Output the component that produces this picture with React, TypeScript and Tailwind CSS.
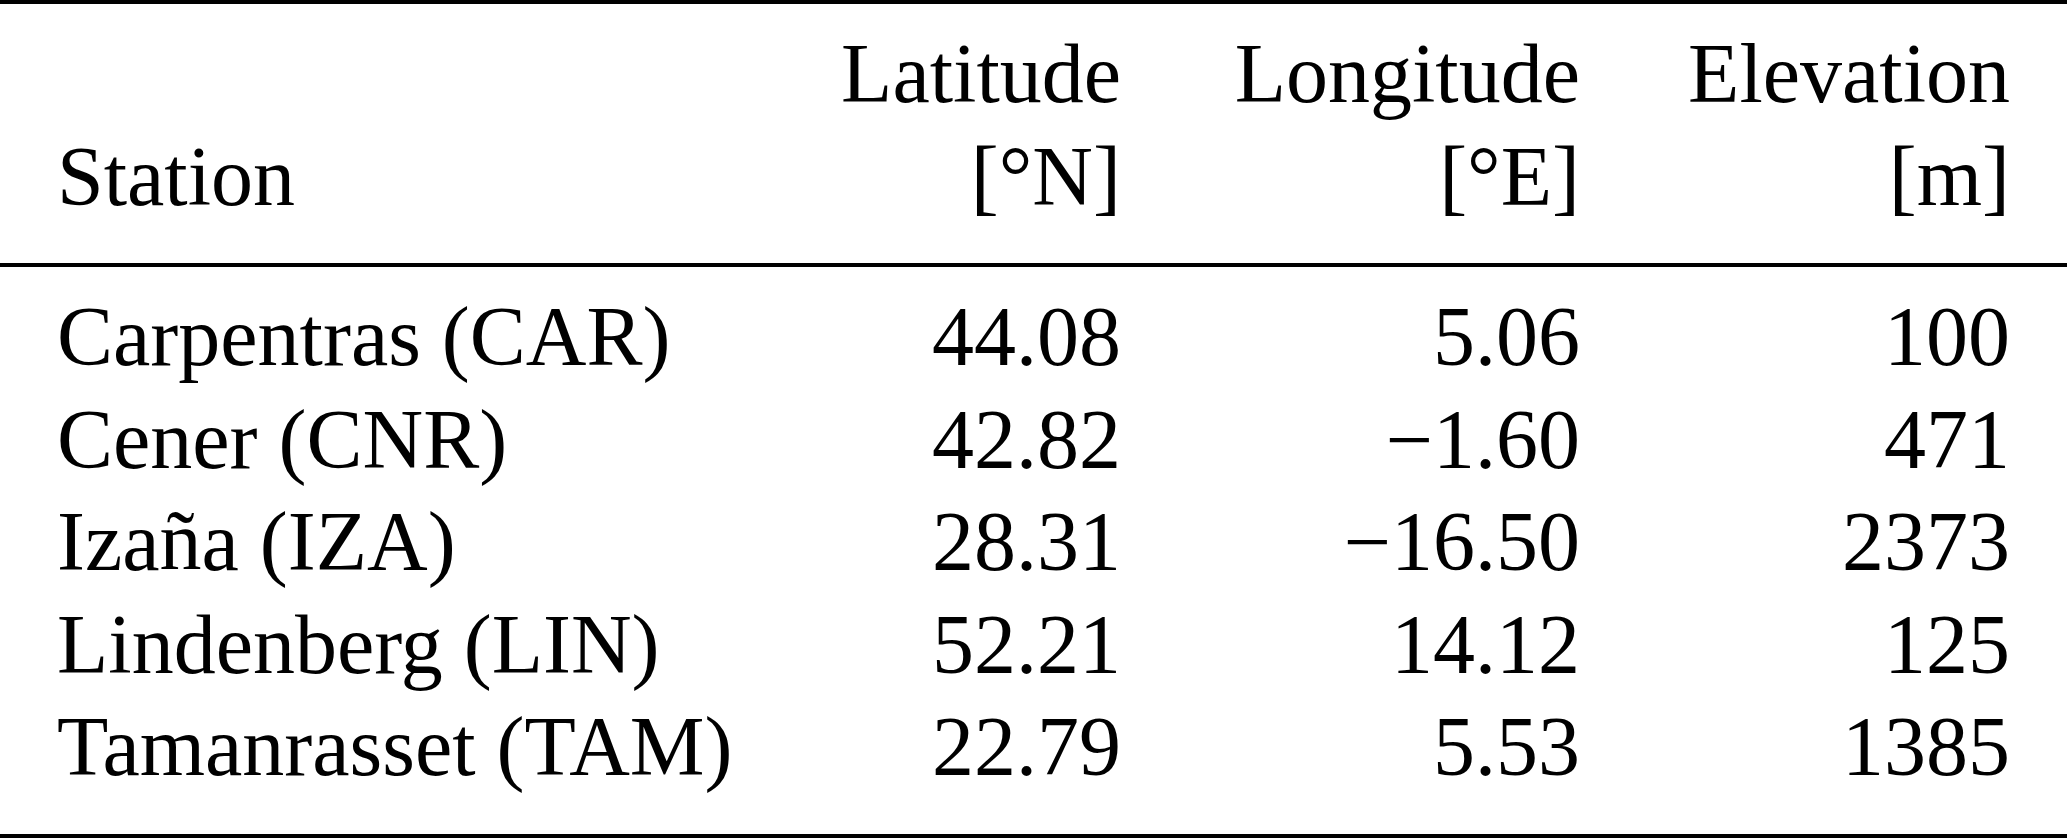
const rows = [
  { name: 'Carpentras (CAR)', lat: '44.08', lon: '5.06', elev: '100' },
  { name: 'Cener (CNR)', lat: '42.82', lon: '\u22121.60', elev: '471' },
  { name: 'Izaña (IZA)', lat: '28.31', lon: '\u221216.50', elev: '2373' },
  { name: 'Lindenberg (LIN)', lat: '52.21', lon: '14.12', elev: '125' },
  { name: 'Tamanrasset (TAM)', lat: '22.79', lon: '5.53', elev: '1385' },
]

export default function App() {
  return (
    <div
      className="w-[2067px] h-[838px] bg-white text-black text-[84px] leading-[102.5px]"
      style={{ fontFamily: '"Liberation Serif", "Times New Roman", serif' }}
    >
      {/* top rule */}
      <div className="h-[4px] bg-black" />

      {/* header */}
      <div className="grid grid-cols-[664px_400px_459px_430px] pl-[57px] pt-[19px] pb-[35px]">
        <div className="flex flex-col justify-end">Station</div>
        <div className="flex flex-col items-end">
          <span>Latitude</span>
          <span>[°N]</span>
        </div>
        <div className="flex flex-col items-end">
          <span>Longitude</span>
          <span>[°E]</span>
        </div>
        <div className="flex flex-col items-end">
          <span>Elevation</span>
          <span>[m]</span>
        </div>
      </div>

      {/* mid rule */}
      <div className="h-[4px] bg-black" />

      {/* body */}
      <div className="pt-[19px] pb-[35px]">
        {rows.map(r => (
          <div key={r.name} className="grid grid-cols-[664px_400px_459px_430px] pl-[57px]">
            <div className="whitespace-nowrap">{r.name}</div>
            <div className="text-right">{r.lat}</div>
            <div className="text-right">{r.lon}</div>
            <div className="text-right">{r.elev}</div>
          </div>
        ))}
      </div>

      {/* bottom rule */}
      <div className="h-[4px] bg-black" />
    </div>
  )
}
